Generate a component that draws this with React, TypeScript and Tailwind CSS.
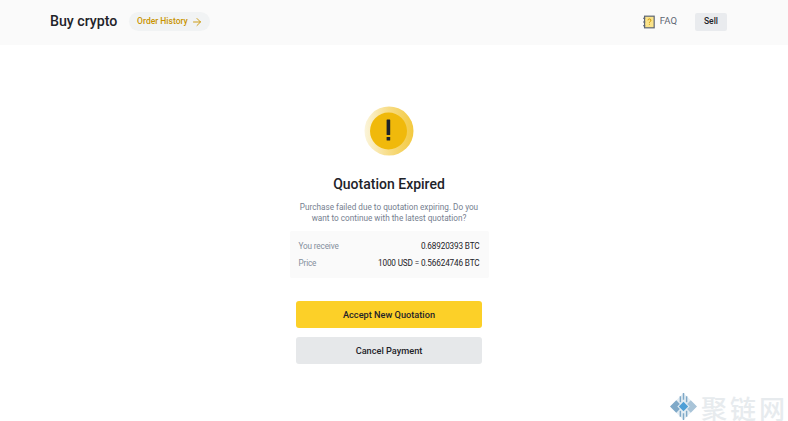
import { ArrowRight } from "lucide-react"

const FONT = "font-['Roboto','Liberation_Sans',sans-serif]"

function WarningCoin() {
  return (
    <svg width="50" height="50" viewBox="0 0 50 50" aria-hidden>
      <defs>
        <linearGradient id="halo" x1="0" y1="0.5" x2="1" y2="0.5">
          <stop offset="0" stopColor="#fbf5dc" />
          <stop offset="0.5" stopColor="#f7dc85" />
          <stop offset="1" stopColor="#f3c93f" />
        </linearGradient>
      </defs>
      <circle cx="25" cy="25" r="24.5" fill="url(#halo)" />
      <circle cx="24.500" cy="25" r="18.5" fill="#f0b90b" />
      <rect x="22.6" y="13.500" width="3.6" height="15.500" rx="0.6" fill="#1e2329" />
      <rect x="22.6" y="31" width="3.6" height="3.6" rx="0.6" fill="#1e2329" />
    </svg>
  )
}

function FaqIcon() {
  return (
    <svg width="12" height="14" viewBox="0 0 13 14" aria-hidden>
      <rect x="1.7" y="0.7" width="10.4" height="12.6" fill="#fbe38a" stroke="#5e6673" strokeWidth="1.3" />
      <path d="M0 3h2.4M0 7h2.400M0 11h2.400" stroke="#5e6673" strokeWidth="1.1" />
      <path d="M5.400 5.200a1.600 1.600 0 1 1 2.200 1.500c-.5.2-.7.5-.7 1.100" fill="none" stroke="#c99400" strokeWidth="1" />
      <rect x="6.400" y="9" width="1" height="1" fill="#c99400" />
    </svg>
  )
}

function WatermarkLogo() {
  return (
    <svg width="29" height="29" viewBox="0 0 28 28" aria-hidden>
      <path d="M14 1 27 14 14 27 1 14Z" fill="#e4edf3" />
      <path d="M14 9.500 18.500 14 14 18.500 9.500 14Z" fill="#4f9fd6" />
      <path d="M1 14 7 8l3.500 3.500L8 14l2.500 2.500L7 20Z" fill="#7fa9c8" />
      <path d="M14 1v6.500M11 4v6M17 4v6M14 27v-6.500M11 24v-6M17 24v-6" stroke="#7fa9c8" strokeWidth="1.4" />
      <path d="M27 14l-6-6-3.500 3.500L20 14l-2.500 2.500L21 20Z" fill="#a9c4d8" />
    </svg>
  )
}

export default function App() {
  return (
    <div className={`${FONT} relative flex h-[421px] w-[788px] flex-col overflow-hidden bg-white text-[#1e2329]`}>
      <header className="flex h-[45px] shrink-0 items-center justify-between bg-[#fafafa] pb-[2px] pl-[50px] pr-[61px]">
        <div className="flex items-center gap-[12px]">
          <h1 className="text-[14.200px] font-medium leading-none">Buy crypto</h1>
          <a className="flex h-[19px] w-[81px] items-center justify-center gap-[3px] rounded-full bg-[#f1f3f4] text-[8.500px] font-medium text-[#c99400]">
            Order History
            <ArrowRight size={12} strokeWidth={1.8} />
          </a>
        </div>
        <div className="flex items-center gap-[18px]">
          <div className="flex items-center gap-[5px] text-[9.500px] text-[#5e6673]">
            <FaqIcon />
            FAQ
          </div>
          <button className="h-[18px] w-[32px] rounded-[2px] bg-[#e9ebee] text-[8.500px] font-medium text-[#1e2329]">
            Sell
          </button>
        </div>
      </header>

      <main className="flex flex-col items-center pr-[10px] pt-[61px]">
        <WarningCoin />
        <h2 className="mt-[18px] text-[14px] font-medium leading-[20px]">Quotation Expired</h2>
        <p className="mt-[8px] w-[190px] text-center text-[8.200px] leading-[11px] text-[#76808f]">
          Purchase failed due to quotation expiring. Do you want to continue with the latest quotation?
        </p>
        <div className="mt-[7px] flex h-[47px] w-[199px] flex-col justify-center gap-[6px] rounded-[2px] bg-[#fafafa] px-[9px] text-[8.200px] leading-[11px] tracking-[-0.15px]">
          <div className="flex justify-between">
            <span className="text-[#848e9c]">You receive</span>
            <span>0.68920393 BTC</span>
          </div>
          <div className="flex justify-between">
            <span className="text-[#848e9c]">Price</span>
            <span>1000 USD = 0.56624746 BTC</span>
          </div>
        </div>
        <button className="mt-[23px] h-[27px] w-[186px] rounded-[3px] bg-[#fcd028] text-[9.200px] font-medium">
          Accept New Quotation
        </button>
        <button className="mt-[9px] h-[27px] w-[186px] rounded-[3px] bg-[#e6e8ea] text-[9.200px] font-medium">
          Cancel Payment
        </button>
      </main>

      <div className="absolute bottom-[0px] right-[0px] flex items-center gap-[3px]">
        <WatermarkLogo />
        <span className="mt-[3px] font-['Noto_Sans_CJK_SC',sans-serif] text-[26px] font-medium leading-[26px] tracking-[3px] text-[#e7ebee]">
          聚链网
        </span>
      </div>
    </div>
  )
}
